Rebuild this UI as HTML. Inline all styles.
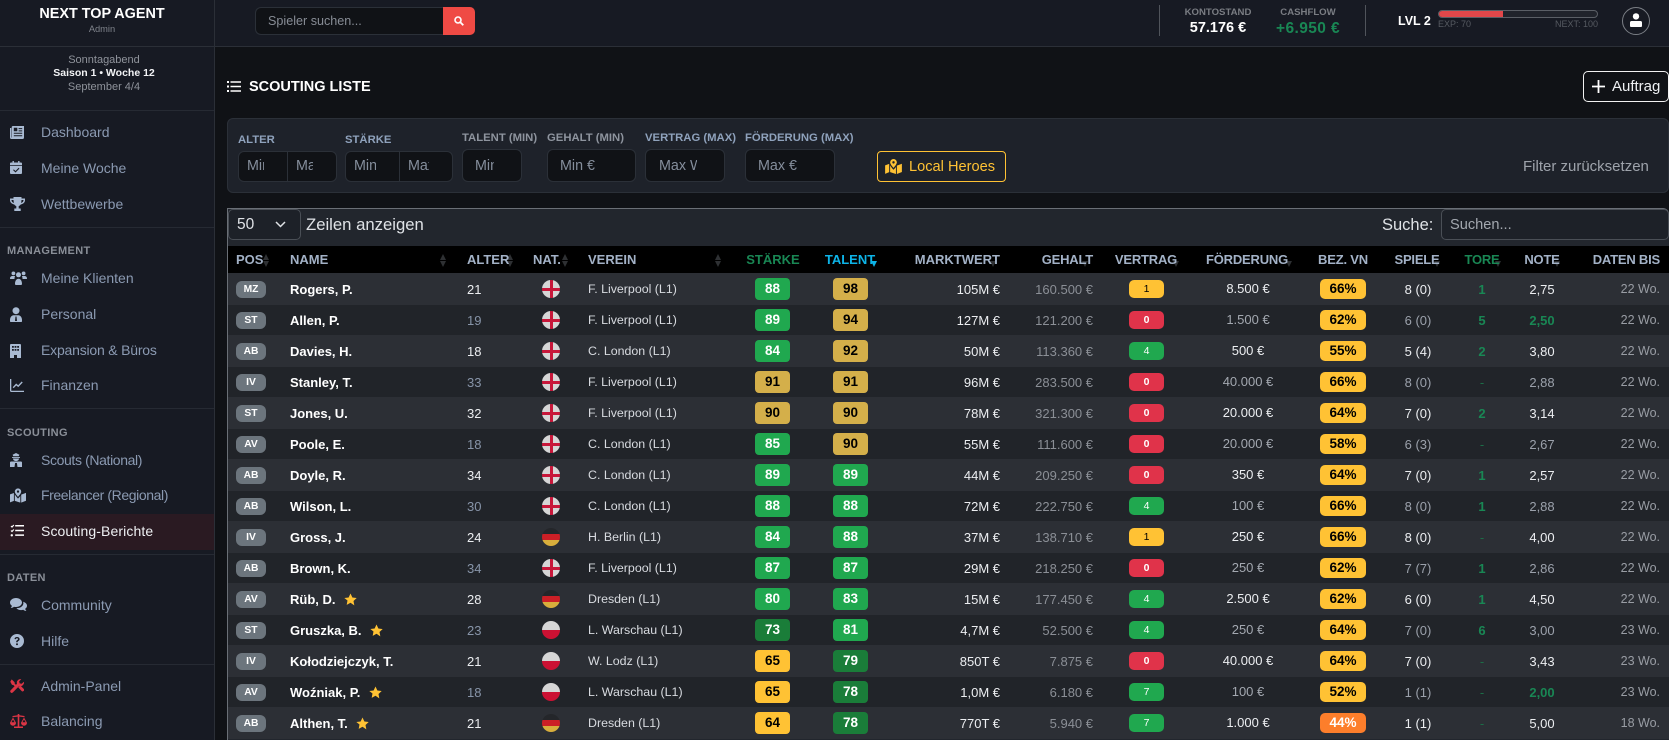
<!DOCTYPE html>
<html lang="de"><head><meta charset="utf-8"><title>Scouting Liste</title>
<style>
*{box-sizing:border-box}
html,body{margin:0;padding:0;width:1669px;height:740px;overflow:hidden;background:#101216;font-family:"Liberation Sans","DejaVu Sans",sans-serif;color:#fff}
.a{position:absolute;white-space:nowrap}
#side{position:absolute;left:0;top:0;width:215px;height:740px;background:#171a23;border-right:1px solid #2b2f37}
#top{position:absolute;left:215px;top:0;width:1454px;height:47px;background:#171a23;border-bottom:1px solid #2b2f37}
.hr{position:absolute;left:0;width:214px;height:1px;background:#262a33}
.n{position:absolute;left:41px;font-size:14px;line-height:20px;color:#8b9ab2;white-space:nowrap}
.sec{position:absolute;left:7px;font-size:11px;line-height:14px;font-weight:700;color:#8a8f98;letter-spacing:.35px}
.ic{position:absolute;color:#a9bad2;fill:currentColor}
.red{color:#dc3545}
.c{text-align:center}
.lb{position:absolute;font-size:11.3px;line-height:14px;font-weight:700;color:#8fa2bc;white-space:nowrap}
.inp{position:absolute;background:#101216;border:1px solid #2b3038;border-radius:6px}
.ph{position:absolute;font-size:14.3px;line-height:20px;color:#858e9c;overflow:hidden;white-space:nowrap}
#tw{position:absolute;left:227px;top:208px;width:1442px;height:532px;background:#22262d;border-left:1px solid #6a6f76;border-top:1px solid #6a6f76;border-top-right-radius:6px}
#hd{position:absolute;left:228px;top:246px;width:1441px;height:27px;background:#000}
.h{position:absolute;top:246px;font-size:13px;line-height:27px;font-weight:700;color:#a3b2c7;white-space:nowrap}
.h.t{letter-spacing:-.2px}
.up,.dn{position:absolute;width:0;height:0;border-left:3px solid transparent;border-right:3px solid transparent}
.up{border-bottom:6px solid #2e3033;top:254px}
.dn{border-top:6px solid #2e3033;top:261px}
.r{position:absolute;left:228px;width:1441px;height:32px;background:#212429}
.r.o{background:#2c2f35;z-index:1}
.r>*{position:absolute;top:0;font-style:normal;font-size:13px;line-height:33px;white-space:nowrap;color:#eceef1}
.r>:nth-child(1){left:8px;top:8px;width:30px;height:17px;border-radius:6px;background:#6c757d;color:#fff;font-weight:700;font-size:10.3px;line-height:17px;text-align:center}
.r>:nth-child(2){left:62px;font-weight:700;color:#fff}
.r>:nth-child(3){left:239px}
.r>:nth-child(4){left:314px;top:7px;width:18px;height:18px;border-radius:50%}
.r>:nth-child(5){left:360px;font-size:12.4px;line-height:32px;color:#d8dbe0}
.r>:nth-child(6),.r>:nth-child(7){top:5px;width:35px;height:22px;border-radius:4px;font-weight:700;font-size:13.5px;line-height:22px;text-align:center;color:#fff}
.r>:nth-child(6){left:527px}
.r>:nth-child(7){left:605px}
.r>:nth-child(8){left:672px;width:100px;text-align:right}
.r>:nth-child(9){left:765px;width:100px;text-align:right;color:#8b8f96}
.r>:nth-child(10){left:901px;top:7px;width:35px;height:18px;border-radius:5px;font-size:10.5px;line-height:18px;text-align:center;color:#fff}
.r>:nth-child(11){left:970px;width:100px;text-align:center;font-size:13px;line-height:32px}
.r>:nth-child(12){left:1092px;top:6px;width:46px;height:20px;border-radius:5px;background:#ffc234;color:#000;font-weight:700;font-size:13.5px;line-height:20px;text-align:center}
.r>:nth-child(13){left:1150px;width:80px;text-align:center}
.r>:nth-child(14){left:1214px;width:80px;text-align:center;font-weight:700;color:#198754}
.r>:nth-child(15){left:1274px;width:80px;text-align:center}
.r>:nth-child(16){left:1332px;width:100px;text-align:right;font-size:12.5px;line-height:32px;color:#999da4}
.r:not(.o)>:nth-child(3){color:#8794a8}
.r:not(.o)>:nth-child(11){color:#a3a8b0}
.r:not(.o)>:nth-child(13),.r:not(.o)>:nth-child(15){color:#9ba1ab}
.r>i.gn{color:#198754!important;font-weight:700}
.r>i.dh{font-weight:400;color:#1c6d47}
.g{background:#20a84f}
.d{background:#1a7d39}
.y{background:#d4af4a;color:#000!important}
.w{background:#ffc234;color:#000!important}
.v{background:#e0334a;font-weight:700}
.en{background:linear-gradient(#c8173a,#c8173a) center/3px 100% no-repeat,linear-gradient(#c8173a,#c8173a) center/100% 3px no-repeat,#d6d6d6}
.de{background:linear-gradient(#24262a 0 33%,#cc1f26 33% 66%,#d8ae3c 66%)}
.pl{background:linear-gradient(#d6d6d6 50%,#cc1133 50%)}
.r>i>svg{width:13px;height:13px;margin-left:5px;vertical-align:-2px;fill:#ffc234}
</style></head><body>
<svg width="0" height="0" style="position:absolute"><defs>
<symbol id="st" viewBox="0 0 16 16"><path d="M8 .6l2.3 4.9 5.3.7-3.9 3.7 1 5.3L8 12l-4.7 2.6 1-5.3L.4 6.2l5.3-.7z"/></symbol>
<symbol id="mp" viewBox="0 0 18 16"><path fill-rule="evenodd" d="M9 0a3.600 3.600 0 0 0-3.600 3.600c0 2 3.600 5.900 3.600 5.900s3.600-3.900 3.600-5.900A3.600 3.600 0 0 0 9 0zm0 2.300a1.300 1.300 0 1 1 0 2.600 1.300 1.300 0 0 1 0-2.600z"/><path d="M0 6.800l4.400-1.600V14L0 15.800zM5.400 6.800c1 1.700 2.400 3.500 3.600 4.700 .9-1 1.800-1.800 2.600-3V16l-6.200-2zM12.600 7L18 5v8.900L12.600 16z"/></symbol>
</defs></svg>

<div id="side">
<div class="a c" style="left:0;width:204px;top:5px;font-size:14.4px;line-height:18px;font-weight:700;color:#fff">NEXT TOP AGENT</div>
<div class="a c" style="left:0;width:204px;top:23px;font-size:9.3px;line-height:12px;color:#7f838b">Admin</div>
<div class="hr" style="top:46px;background:#2b2f37"></div>
<div class="a c" style="left:0;width:208px;top:53px;font-size:11px;line-height:14px;color:#8f939b">Sonntagabend</div>
<div class="a c" style="left:0;width:208px;top:66px;font-size:10.5px;line-height:14px;font-weight:700;color:#f2f3f5">Saison 1 • Woche 12</div>
<div class="a c" style="left:0;width:208px;top:80px;font-size:11px;line-height:14px;color:#8f939b">September 4/4</div>
<div class="hr" style="top:110px"></div>

<svg class="ic" style="left:10px;top:126px" width="14" height="13" viewBox="0 0 14 13"><path fill-rule="evenodd" d="M3 0h11v11.500a1.500 1.500 0 0 1-1.500 1.500H1.500A1.500 1.500 0 0 1 0 11.500V2h1.300v9.500h.4V1.300A1.300 1.300 0 0 1 3 0zm.800 1.800v3.400h3.500V1.800zm4.800.3v1h3.600v-1zm0 2.300v1h3.600v-1zM3.800 6.800v1h8.400v-1zm0 2.400v1h8.400v-1z"/></svg>
<div class="n" style="top:122px">Dashboard</div>
<svg class="ic" style="left:10px;top:161px" width="12" height="13" viewBox="0 0 12 13"><path fill-rule="evenodd" d="M2.500 0h1.400v1.500h4.200V0h1.400v1.500H11A1 1 0 0 1 12 2.500V4.200H0V2.500a1 1 0 0 1 1-1h1.500zM0 5h12v7a1 1 0 0 1-1 1H1a1 1 0 0 1-1-1zm8.700 1.800L5.500 10 3.800 8.400l-.7.700 2.400 2.400 3.900-3.900z"/></svg>
<div class="n" style="top:158px">Meine Woche</div>
<svg class="ic" style="left:10px;top:197px" width="15" height="14" viewBox="0 0 15 14"><path fill-rule="evenodd" d="M3.500 0h8v1.500H15v1.800c0 2-1.800 3.800-4.300 4.200-.6.900-1.300 1.400-2 1.600V11.500h2V14H4.300v-2.500h2V9.100c-.7-.2-1.400-.7-2-1.600C1.800 7.100 0 5.300 0 3.300V1.500h3.500zM1.500 3v.3c0 1.100.9 2.200 2.400 2.700C3.700 5.100 3.600 4.100 3.500 3zm10 0c-.1 1.100-.2 2.100-.4 3 1.500-.5 2.400-1.600 2.400-2.700V3z"/></svg>
<div class="n" style="top:194px">Wettbewerbe</div>
<div class="hr" style="top:227px"></div>
<div class="sec" style="top:244px">MANAGEMENT</div>
<svg class="ic" style="left:10px;top:271px" width="17" height="14" viewBox="0 0 17 14"><circle cx="3.400" cy="2.400" r="1.900"/><circle cx="13.600" cy="2.400" r="1.900"/><circle cx="8.500" cy="3.800" r="2.500"/><path d="M0 7.500C0 5.800 1.200 5 2.500 5h1.800c.3 0 .6 0 .8.200C4.600 6 4.400 7 4.500 8H.5C.2 8 0 7.800 0 7.500zM17 7.500C17 5.800 15.800 5 14.500 5h-1.800c-.3 0-.6 0-.8.200.5.800.7 1.800.6 2.800h4c.3 0 .5-.2.500-.5zM5 13c0-3 1.300-5.200 3.500-5.200S12 10 12 13c0 .6-.4 1-1 1H6c-.6 0-1-.4-1-1z"/></svg>
<div class="n" style="top:268px">Meine Klienten</div>
<svg class="ic" style="left:10px;top:307px" width="12" height="15" viewBox="0 0 12 15"><circle cx="6" cy="3.700" r="3.500"/><path fill-rule="evenodd" d="M3.500 8.300h5C10.500 8.500 12 10.500 12 13v1.200a.8.800 0 0 1-.8.800H.8a.8.800 0 0 1-.8-.8V13c0-2.500 1.500-4.500 3.500-4.700zM5.500 9.500L5 14h2l-.5-4.500z"/></svg>
<div class="n" style="top:304px">Personal</div>
<svg class="ic" style="left:10px;top:344px" width="11" height="14" viewBox="0 0 11 14"><path fill-rule="evenodd" d="M1 0h9a1 1 0 0 1 1 1v13H7v-3H4v3H0V1a1 1 0 0 1 1-1zm1 2v1.800h1.800V2zm2.600 0v1.800h1.800V2zM7.200 2v1.800H9V2zM2 5v1.800h1.800V5zm2.600 0v1.800h1.800V5zM7.200 5v1.800H9V5z"/></svg>
<div class="n" style="top:340px;letter-spacing:-.2px">Expansion &amp; Büros</div>
<svg class="ic" style="left:10px;top:379px" width="14" height="13" viewBox="0 0 14 13"><path d="M0 0h1.300v11.700H14V13H1.200A1.200 1.200 0 0 1 0 11.800z"/><path d="M3.200 8.700l3-3.200 2 1.700 4-4.200" fill="none" stroke="currentColor" stroke-width="1.400"/></svg>
<div class="n" style="top:375px">Finanzen</div>
<div class="hr" style="top:408px"></div>
<div class="sec" style="top:426px">SCOUTING</div>
<svg class="ic" style="left:10px;top:453px" width="12" height="14" viewBox="0 0 12 14"><path fill-rule="evenodd" d="M6 0l3.400 1.800-.7 1.500H3.300L2.600 1.800zM2 4h8v.9H2zM3 5.500h6c0 1.500-1.300 2.600-3 2.600S3 7 3 5.500zM1 8.500h10c.6 0 1 .5 1 1V14H7.500l-.6-4H5.100l-.6 4H0V9.500c0-.5.400-1 1-1z"/></svg>
<div class="n" style="top:450px;letter-spacing:-.37px">Scouts (National)</div>
<svg class="ic" style="left:10px;top:488px" width="16" height="15" viewBox="0 0 18 16"><use href="#mp"/></svg>
<div class="n" style="top:485px;letter-spacing:-.4px">Freelancer (Regional)</div>
<div class="a" style="left:0;top:514px;width:214px;height:36px;background:#2a1a22"></div>
<svg class="ic" style="left:10px;top:524px;color:#fff" width="14" height="13" viewBox="0 0 14 13"><path d="M1 2l1 1 1.800-2" fill="none" stroke="currentColor" stroke-width="1.200"/><path d="M1 6.500l1 1 1.800-2" fill="none" stroke="currentColor" stroke-width="1.200"/><circle cx="1.800" cy="11.300" r="1.200"/><path d="M5.200 1h8.800v1.500H5.200zM5.200 5.700h8.800v1.500H5.200zM5.200 10.400h8.800v1.500H5.200z"/></svg>
<div class="n" style="top:521px;color:#eef0f3;letter-spacing:.1px">Scouting-Berichte</div>
<div class="hr" style="top:554px"></div>
<div class="sec" style="top:571px">DATEN</div>
<svg class="ic" style="left:10px;top:598px" width="17" height="14" viewBox="0 0 17 14"><path d="M6 0c3.300 0 6 2 6 4.500S9.300 9 6 9c-.7 0-1.400-.1-2-.3C3.300 9.300 2 10 .7 10c.7-.7 1.100-1.500 1.200-2.200C.7 7 0 5.800 0 4.500 0 2 2.700 0 6 0z"/><path d="M13 3.800c2.300.5 4 2.100 4 4 0 1.200-.7 2.300-1.800 3 .1.700.5 1.500 1.200 2.200-1.200 0-2.400-.6-3.200-1.200-.6.200-1.300.3-2 .3-2 0-3.800-.8-4.800-2 4 .2 7.300-2.300 7-5.500z"/></svg>
<div class="n" style="top:595px">Community</div>
<svg class="ic" style="left:10px;top:634px" width="14" height="14" viewBox="0 0 14 14"><path fill-rule="evenodd" d="M7 0a7 7 0 1 1 0 14A7 7 0 0 1 7 0zm0 9.200a1 1 0 1 0 0 2 1 1 0 0 0 0-2zM7 3C5.600 3 4.700 3.800 4.500 5l1.300.3c.1-.6.500-1 1.200-1 .6 0 1 .3 1 .8 0 .4-.2.600-.8 1-.7.400-1 .9-1 1.700v.4h1.500v-.3c0-.4.200-.6.700-.9.800-.5 1.200-1 1.200-1.900C9.600 3.900 8.600 3 7 3z"/></svg>
<div class="n" style="top:631px">Hilfe</div>
<div class="hr" style="top:664px"></div>
<svg class="ic red" style="left:10px;top:679px" width="14" height="14" viewBox="0 0 14 14"><path d="M1.700.4L4.600 3.300l.1 1.300 2 2-1.400 1.400-2-2-1.300-.1L.3 2.800zM13.900 2.800a3.600 3.600 0 0 1-4.700 4.200L2.900 13.400a1.500 1.500 0 0 1-2.200-2.100L7 4.800A3.600 3.600 0 0 1 11.300.2L9.200 2.300l.4 2.100 2.100.4zM8.200 8.400l2-2 3.400 3.400a1.400 1.400 0 0 1-2 2.200z"/></svg>
<div class="n" style="top:676px">Admin-Panel</div>
<svg class="ic red" style="left:10px;top:714px" width="17" height="14" viewBox="0 0 17 14"><path d="M7.700 0h1.600v1.200l5.200.8v1.200L9.300 2.600V12.500h3.700V14H4v-1.500h3.700V2.600L2.500 3.200V2l5.200-.8z"/><path d="M3 3.500l3 5.200a3 3 0 0 1-6 0zM3 5.500L1.400 8.300h3.200zM14 3.500l3 5.200a3 3 0 0 1-6 0zM14 5.500l-1.600 2.800h3.200z" fill-rule="evenodd"/></svg>
<div class="n" style="top:711px">Balancing</div>
</div>

<div id="top"></div>
<div class="a" style="left:255px;top:7px;width:189px;height:28px;background:#101216;border:1px solid #2b3038;border-right:0;border-radius:6px 0 0 6px"></div>
<div class="a" style="left:268px;top:11px;font-size:12.6px;line-height:20px;color:#878c95">Spieler suchen...</div>
<div class="a" style="left:443px;top:7px;width:32px;height:28px;background:#ef4a44;border-radius:0 5px 5px 0"></div>
<svg class="a" style="left:454px;top:16px" width="10" height="10" viewBox="0 0 10 10"><circle cx="4" cy="4" r="3" fill="none" stroke="#fff" stroke-width="1.600"/><path d="M6.300 6.300L9.300 9.300" stroke="#fff" stroke-width="1.800"/></svg>

<div class="a" style="left:1159px;top:5px;width:1px;height:31px;background:#50545b"></div>
<div class="a c" style="left:1168px;width:100px;top:6px;font-size:9.600px;line-height:13px;font-weight:700;color:#7a7d83">KONTOSTAND</div>
<div class="a c" style="left:1168px;width:100px;top:19px;font-size:14.500px;line-height:19px;font-weight:700;color:#fff">57.176 €</div>
<div class="a c" style="left:1258px;width:100px;top:6px;font-size:9.600px;line-height:13px;font-weight:700;color:#7a7d83">CASHFLOW</div>
<div class="a c" style="left:1258px;width:100px;top:19px;font-size:15.500px;line-height:19px;font-weight:700;color:#198754;letter-spacing:.4px">+6.950 €</div>
<div class="a" style="left:1365px;top:5px;width:1px;height:31px;background:#50545b"></div>
<div class="a" style="left:1398px;top:13px;font-size:12.500px;line-height:16px;font-weight:700;color:#fff">LVL 2</div>
<div class="a" style="left:1438px;top:10px;width:160px;height:8px;border:1px solid #5b5f66;border-radius:4px;overflow:hidden;background:#20232b"><div style="width:64px;height:8px;background:#e2474a;margin-top:-1px"></div></div>
<div class="a" style="left:1438px;top:18px;font-size:9px;line-height:12px;color:#565a61">EXP: 70</div>
<div class="a" style="left:1498px;width:100px;text-align:right;top:18px;font-size:9px;line-height:12px;color:#565a61">NEXT: 100</div>
<div class="a" style="left:1622px;top:7px;width:28px;height:28px;border:1px solid #7b7f86;border-radius:50%"></div>
<svg class="a" style="left:1630px;top:13px" width="12" height="14" viewBox="0 0 12 14"><circle cx="6" cy="3.400" r="3.200" fill="#fff"/><path d="M1.500 8h9c.9 0 1.500.7 1.500 1.500V13a1 1 0 0 1-1 1H1a1 1 0 0 1-1-1V9.500C0 8.700.6 8 1.500 8z" fill="#fff"/></svg>

<svg class="a" style="left:227px;top:81px;color:#fff" width="14" height="11" viewBox="0 0 14 11"><path fill="#fff" d="M0 0h2v2H0zM3.500 .2H14v1.500H3.500zM0 4.500h2v2H0zM3.500 4.700H14v1.500H3.500zM0 9h2v2H0zM3.500 9.200H14v1.500H3.500z"/></svg>
<div class="a" style="left:249px;top:78px;font-size:14.500px;line-height:18px;font-weight:700;color:#fff">SCOUTING LISTE</div>
<div class="a" style="left:1583px;top:71px;width:86px;height:31px;border:1px solid #f2f2f2;border-radius:5px"></div>
<svg class="a" style="left:1592px;top:80px" width="13" height="13" viewBox="0 0 13 13"><path d="M6.500 0v13M0 6.500h13" stroke="#fff" stroke-width="1.800"/></svg>
<div class="a" style="left:1612px;top:77px;font-size:15px;line-height:20px;color:#eef0f3">Auftrag</div>

<div class="a" style="left:227px;top:118px;width:1442px;height:75px;background:#1e222a;border:1px solid #2b3038;border-radius:6px"></div>
<div class="lb" style="left:238px;top:133px">ALTER</div>
<div class="lb" style="left:345px;top:133px">STÄRKE</div>
<div class="lb" style="left:462px;top:131px;color:#8e949e">TALENT (MIN)</div>
<div class="lb" style="left:547px;top:131px;color:#8e949e">GEHALT (MIN)</div>
<div class="lb" style="left:645px;top:131px">VERTRAG (MAX)</div>
<div class="lb" style="left:745px;top:131px">FÖRDERUNG (MAX)</div>
<div class="inp" style="left:238px;top:151px;width:99px;height:31px"></div><div class="a" style="left:287px;top:151px;width:1px;height:31px;background:#2b3038"></div>
<div class="ph" style="left:247px;top:156px;width:17px">Min</div><div class="ph" style="left:296px;top:156px;width:17px">Max</div>
<div class="inp" style="left:345px;top:151px;width:108px;height:31px"></div><div class="a" style="left:399px;top:151px;width:1px;height:31px;background:#2b3038"></div>
<div class="ph" style="left:354px;top:156px;width:22px">Min</div><div class="ph" style="left:408px;top:156px;width:21px">Max</div>
<div class="inp" style="left:462px;top:149px;width:60px;height:33px"></div><div class="ph" style="left:475px;top:156px;width:19px">Min</div>
<div class="inp" style="left:547px;top:149px;width:89px;height:33px"></div><div class="ph" style="left:560px;top:156px;width:50px">Min €</div>
<div class="inp" style="left:645px;top:149px;width:80px;height:33px"></div><div class="ph" style="left:659px;top:156px;width:38px">Max Wo.</div>
<div class="inp" style="left:745px;top:149px;width:90px;height:33px"></div><div class="ph" style="left:758px;top:156px;width:50px">Max €</div>
<div class="a" style="left:877px;top:151px;width:129px;height:31px;border:1px solid #ffc234;border-radius:4px"></div>
<svg class="ic" style="left:885px;top:159px;color:#ffc234" width="17" height="15" viewBox="0 0 18 16"><use href="#mp"/></svg>
<div class="a" style="left:909px;top:157px;font-size:14.600px;line-height:20px;color:#ffc234">Local Heroes</div>
<div class="a" style="left:1523px;top:157px;font-size:15px;line-height:20px;color:#9ea3ab">Filter zurücksetzen</div>

<div id="tw"></div>
<div class="a" style="left:228px;top:209px;width:73px;height:31px;background:#1d2128;border:1px solid #4a4f56;border-radius:5px"></div>
<div class="a" style="left:237px;top:215px;font-size:15.500px;line-height:20px;color:#dfe2e6">50</div>
<svg class="a" style="left:275px;top:221px" width="11" height="7" viewBox="0 0 11 7"><path d="M1 1l4.500 4.500L10 1" fill="none" stroke="#dfe2e6" stroke-width="1.500"/></svg>
<div class="a" style="left:306px;top:215px;font-size:16.700px;line-height:20px;color:#dfe2e6">Zeilen anzeigen</div>
<div class="a" style="left:1382px;top:215px;font-size:16.500px;line-height:20px;color:#dfe2e6">Suche:</div>
<div class="a" style="left:1441px;top:209px;width:228px;height:31px;background:#1d2128;border:1px solid #4a4f56;border-radius:5px"></div>
<div class="a" style="left:1450px;top:215px;font-size:14.600px;line-height:20px;color:#a3a8af">Suchen...</div>

<div id="hd"></div>
<i class="up" style="left:263px"></i><i class="dn" style="left:263px"></i>
<i class="up" style="left:440px"></i><i class="dn" style="left:440px"></i>
<i class="up" style="left:507px"></i><i class="dn" style="left:507px"></i>
<i class="up" style="left:562px"></i><i class="dn" style="left:562px"></i>
<i class="up" style="left:715px"></i><i class="dn" style="left:715px"></i>
<i class="dn" style="left:871px;border-top-color:#0db4e8"></i>
<i class="dn" style="left:990px"></i><i class="dn" style="left:1082px"></i><i class="dn" style="left:1173px"></i><i class="dn" style="left:1286px"></i><i class="dn" style="left:1434px"></i><i class="dn" style="left:1495px"></i><i class="dn" style="left:1554px"></i>
<div class="h" style="left:236px">POS</div>
<div class="h" style="left:290px">NAME</div>
<div class="h" style="left:467px">ALTER</div>
<div class="h" style="left:533px">NAT.</div>
<div class="h" style="left:588px">VEREIN</div>
<div class="h c" style="left:723px;width:100px;color:#198754">STÄRKE</div>
<div class="h c" style="left:800px;width:100px;color:#0db4e8">TALENT</div>
<div class="h" style="left:900px;width:100px;text-align:right">MARKTWERT</div>
<div class="h t" style="left:993px;width:100px;text-align:right">GEHALT</div>
<div class="h c t" style="left:1096px;width:100px">VERTRAG</div>
<div class="h c t" style="left:1197px;width:100px">FÖRDERUNG</div>
<div class="h c t" style="left:1293px;width:100px">BEZ. VN</div>
<div class="h c t" style="left:1367px;width:100px">SPIELE</div>
<div class="h c t" style="left:1432px;width:100px;color:#198754">TORE</div>
<div class="h c t" style="left:1492px;width:100px">NOTE</div>
<div class="h t" style="left:1560px;width:100px;text-align:right">DATEN BIS</div>

<div class="r o" style="top:273px"><i>MZ</i><i>Rogers, P.</i><i>21</i><i class="en"></i><i>F. Liverpool (L1)</i><i class="g">88</i><i class="y">98</i><i>105M €</i><i>160.500 €</i><i class="w">1</i><i>8.500 €</i><i>66%</i><i>8 (0)</i><i>1</i><i>2,75</i><i>22 Wo.</i></div>
<div class="r" style="top:304px"><i>ST</i><i>Allen, P.</i><i>19</i><i class="en"></i><i>F. Liverpool (L1)</i><i class="g">89</i><i class="y">94</i><i>127M €</i><i>121.200 €</i><i class="v">0</i><i>1.500 €</i><i>62%</i><i>6 (0)</i><i>5</i><i class="gn">2,50</i><i>22 Wo.</i></div>
<div class="r o" style="top:335px"><i>AB</i><i>Davies, H.</i><i>18</i><i class="en"></i><i>C. London (L1)</i><i class="g">84</i><i class="y">92</i><i>50M €</i><i>113.360 €</i><i class="g">4</i><i>500 €</i><i>55%</i><i>5 (4)</i><i>2</i><i>3,80</i><i>22 Wo.</i></div>
<div class="r" style="top:366px"><i>IV</i><i>Stanley, T.</i><i>33</i><i class="en"></i><i>F. Liverpool (L1)</i><i class="y">91</i><i class="y">91</i><i>96M €</i><i>283.500 €</i><i class="v">0</i><i>40.000 €</i><i>66%</i><i>8 (0)</i><i class="dh">-</i><i>2,88</i><i>22 Wo.</i></div>
<div class="r o" style="top:397px"><i>ST</i><i>Jones, U.</i><i>32</i><i class="en"></i><i>F. Liverpool (L1)</i><i class="y">90</i><i class="y">90</i><i>78M €</i><i>321.300 €</i><i class="v">0</i><i>20.000 €</i><i>64%</i><i>7 (0)</i><i>2</i><i>3,14</i><i>22 Wo.</i></div>
<div class="r" style="top:428px"><i>AV</i><i>Poole, E.</i><i>18</i><i class="en"></i><i>C. London (L1)</i><i class="g">85</i><i class="y">90</i><i>55M €</i><i>111.600 €</i><i class="v">0</i><i>20.000 €</i><i>58%</i><i>6 (3)</i><i class="dh">-</i><i>2,67</i><i>22 Wo.</i></div>
<div class="r o" style="top:459px"><i>AB</i><i>Doyle, R.</i><i>34</i><i class="en"></i><i>C. London (L1)</i><i class="g">89</i><i class="g">89</i><i>44M €</i><i>209.250 €</i><i class="v">0</i><i>350 €</i><i>64%</i><i>7 (0)</i><i>1</i><i>2,57</i><i>22 Wo.</i></div>
<div class="r" style="top:490px"><i>AB</i><i>Wilson, L.</i><i>30</i><i class="en"></i><i>C. London (L1)</i><i class="g">88</i><i class="g">88</i><i>72M €</i><i>222.750 €</i><i class="g">4</i><i>100 €</i><i>66%</i><i>8 (0)</i><i>1</i><i>2,88</i><i>22 Wo.</i></div>
<div class="r o" style="top:521px"><i>IV</i><i>Gross, J.</i><i>24</i><i class="de"></i><i>H. Berlin (L1)</i><i class="g">84</i><i class="g">88</i><i>37M €</i><i>138.710 €</i><i class="w">1</i><i>250 €</i><i>66%</i><i>8 (0)</i><i class="dh">-</i><i>4,00</i><i>22 Wo.</i></div>
<div class="r" style="top:552px"><i>AB</i><i>Brown, K.</i><i>34</i><i class="en"></i><i>F. Liverpool (L1)</i><i class="g">87</i><i class="g">87</i><i>29M €</i><i>218.250 €</i><i class="v">0</i><i>250 €</i><i>62%</i><i>7 (7)</i><i>1</i><i>2,86</i><i>22 Wo.</i></div>
<div class="r o" style="top:583px"><i>AV</i><i>Rüb, D. <svg><use href="#st"/></svg></i><i>28</i><i class="de"></i><i>Dresden (L1)</i><i class="g">80</i><i class="g">83</i><i>15M €</i><i>177.450 €</i><i class="g">4</i><i>2.500 €</i><i>62%</i><i>6 (0)</i><i>1</i><i>4,50</i><i>22 Wo.</i></div>
<div class="r" style="top:614px"><i>ST</i><i>Gruszka, B. <svg><use href="#st"/></svg></i><i>23</i><i class="pl"></i><i>L. Warschau (L1)</i><i class="d">73</i><i class="g">81</i><i>4,7M €</i><i>52.500 €</i><i class="g">4</i><i>250 €</i><i>64%</i><i>7 (0)</i><i>6</i><i>3,00</i><i>23 Wo.</i></div>
<div class="r o" style="top:645px"><i>IV</i><i>Kołodziejczyk, T.</i><i>21</i><i class="pl"></i><i>W. Lodz (L1)</i><i class="w">65</i><i class="d">79</i><i>850T €</i><i>7.875 €</i><i class="v">0</i><i>40.000 €</i><i>64%</i><i>7 (0)</i><i class="dh">-</i><i>3,43</i><i>23 Wo.</i></div>
<div class="r" style="top:676px"><i>AV</i><i>Woźniak, P. <svg><use href="#st"/></svg></i><i>18</i><i class="pl"></i><i>L. Warschau (L1)</i><i class="w">65</i><i class="d">78</i><i>1,0M €</i><i>6.180 €</i><i class="g">7</i><i>100 €</i><i>52%</i><i>1 (1)</i><i class="dh">-</i><i class="gn">2,00</i><i>23 Wo.</i></div>
<div class="r o" style="top:707px"><i>AB</i><i>Althen, T. <svg><use href="#st"/></svg></i><i>21</i><i class="de"></i><i>Dresden (L1)</i><i class="w">64</i><i class="d">78</i><i>770T €</i><i>5.940 €</i><i class="g">7</i><i>1.000 €</i><i style="background:#fd7e2b;color:#fff">44%</i><i>1 (1)</i><i class="dh">-</i><i>5,00</i><i>18 Wo.</i></div>
</body></html>
